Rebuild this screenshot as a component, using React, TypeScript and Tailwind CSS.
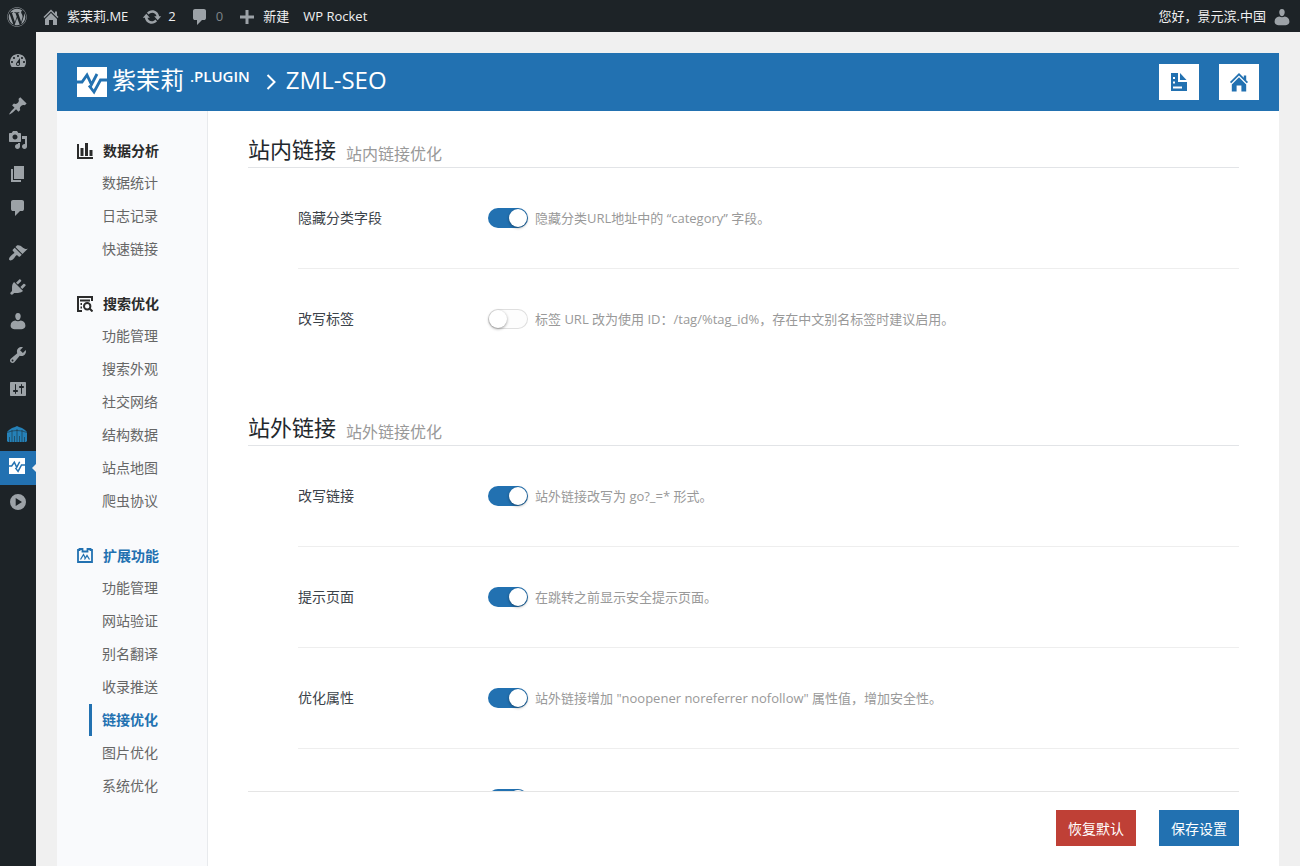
import type { ReactNode } from "react";
import { FaWordpress } from "react-icons/fa";

const DASHICONS = {
    home: "M16 8.5l1.53 1.53-1.06 1.06L10 4.6l-6.47 6.49-1.06-1.06L10 2.5l4 4v-2h2v4zm-6-2.46l6 5.99V18h-4v-5H8v5H4v-5.97z",
    update: "M10.2 3.28c3.53 0 6.43 2.61 6.92 6h2.08l-3.5 4-3.5-4h2.32c-.45-1.97-2.21-3.45-4.32-3.45-1.45 0-2.73.71-3.54 1.78L4.95 5.66C6.23 4.2 8.11 3.28 10.2 3.28zm-.4 13.44c-3.52 0-6.43-2.61-6.92-6H.8l3.5-4c1.17 1.33 2.33 2.67 3.5 4H5.48c.45 1.97 2.21 3.45 4.32 3.45 1.45 0 2.73-.71 3.54-1.78l1.71 1.95c-1.28 1.46-3.15 2.38-5.25 2.38z",
    comment:
        "M5 2h9q.82 0 1.41.59T16 4v7q0 .82-.59 1.41T14 13h-2l-5 5v-5H5q-.82 0-1.41-.59T3 11V4q0-.82.59-1.41T5 2z",
    plus: "M17 8.5v3h-5.5V17h-3v-5.5H3v-3h5.5V3h3v5.5z",
    dashboard:
        "M3.76 16h12.48c1.1-1.37 1.76-3.11 1.76-5 0-4.42-3.58-8-8-8s-8 3.58-8 8c0 1.89.66 3.63 1.76 5zM10 4c.55 0 1 .45 1 1s-.45 1-1 1-1-.45-1-1 .45-1 1-1zM6 6c.55 0 1 .45 1 1s-.45 1-1 1-1-.45-1-1 .45-1 1-1zm8 0c.55 0 1 .45 1 1s-.45 1-1 1-1-.45-1-1 .45-1 1-1zm-5.37 5.55L12 7v6c0 1.1-.9 2-2 2s-2-.9-2-2c0-.57.24-1.08.63-1.45zM4 10c.55 0 1 .45 1 1s-.45 1-1 1-1-.45-1-1 .45-1 1-1zm12 0c.55 0 1 .45 1 1s-.45 1-1 1-1-.45-1-1 .45-1 1-1zm-5 3c0-.55-.45-1-1-1s-1 .45-1 1 .45 1 1 1 1-.45 1-1z",
    post: "M10.44 3.02l1.82-1.82 6.36 6.35-1.83 1.82c-1.05-.68-2.48-.57-3.41.36l-.75.75c-.92.93-1.04 2.35-.35 3.41l-1.83 1.82-2.41-2.41-2.8 2.79c-.42.42-3.38 2.71-3.8 2.29s1.86-3.39 2.28-3.81l2.79-2.79L4.1 9.36l1.83-1.82c1.05.69 2.48.57 3.4-.36l.75-.75c.93-.92 1.05-2.35.36-3.41z",
    media: "M13 11V4c0-.55-.45-1-1-1h-1.67L9 1H5L3.67 3H2c-.55 0-1 .45-1 1v7c0 .55.45 1 1 1h10c.55 0 1-.45 1-1zM7 4.5c1.38 0 2.5 1.12 2.5 2.5S8.38 9.5 7 9.5 4.5 8.38 4.5 7 5.62 4.5 7 4.5zM14 6h5v10.5c0 1.38-1.12 2.5-2.5 2.5S14 17.88 14 16.5s1.12-2.5 2.5-2.5c.17 0 .34.02.5.05V9h-3V6zm-4 8.05V13h2v3.5c0 1.38-1.12 2.5-2.5 2.5S7 17.88 7 16.5 8.12 14 9.5 14c.17 0 .34.02.5.05z",
    page: "M6 15V2h10v13H6zm-1 1h8v2H3V5h2v11z",
    appearance:
        "M14.48 11.06L7.41 3.99l1.5-1.5c.5-.56 2.3-.47 3.51.32 1.21.8 1.43 1.28 2.91 2.1 1.18.64 2.45 1.26 4.45.85zm-.71.71L6.7 4.7 4.93 6.47c-.39.39-.39 1.02 0 1.41l1.06 1.06c.39.39.39 1.03 0 1.42-.6.6-1.43 1.11-2.21 1.69-.35.26-.7.53-1.01.84C1.43 14.23.4 16.08 1.4 17.07c.99 1 2.84-.03 4.18-1.36.31-.31.58-.66.85-1.02.57-.78 1.08-1.61 1.69-2.21.39-.39 1.02-.39 1.41 0l1.06 1.06c.39.39 1.02.39 1.41 0z",
    plugins:
        "M13.11 4.36L9.87 7.6 8 5.73l3.24-3.24c.35-.34 1.05-.2 1.56.32.52.51.66 1.21.31 1.55zm-8 1.77l.91-1.12 9.01 9.01-1.19.84c-.71.71-2.63 1.16-3.82 1.16H6.14L4.9 17.26c-.59.59-1.54.59-2.12 0-.59-.58-.59-1.53 0-2.12l1.24-1.24v-3.88c0-1.13.4-3.19 1.09-3.89zm7.26 3.97l3.24-3.24c.34-.35 1.04-.21 1.55.31.52.51.66 1.21.31 1.55l-3.24 3.25z",
    users: "M10 9.25c-2.27 0-2.73-3.44-2.73-3.44C7 4.02 7.82 2 9.97 2c2.16 0 2.98 2.02 2.71 3.81 0 0-.41 3.44-2.68 3.44zM12.7 9.6c2.6.2 4.7 2 4.7 4.8 0 3-1.9 3.8-7.4 3.8s-7.4-.8-7.4-3.8c0-2.8 2.1-4.6 4.7-4.8 1.6.9 3.8.9 5.4 0z",
    tools: "M16.68 9.77c-1.34 1.34-3.3 1.67-4.95.99l-5.41 6.52c-.99.99-2.59.99-3.58 0s-.99-2.59 0-3.57l6.52-5.42c-.68-1.65-.35-3.61.99-4.95 1.28-1.28 3.12-1.62 4.72-1.06l-2.89 2.89 2.82 2.82 2.86-2.87c.53 1.58.18 3.39-1.08 4.65zM3.81 16.21c.4.39 1.04.39 1.43 0 .4-.4.4-1.04 0-1.43-.39-.4-1.03-.4-1.43 0-.39.39-.39 1.03 0 1.43z",
    settings:
        "M18 16V4c0-.55-.45-1-1-1H3c-.55 0-1 .45-1 1v12c0 .55.45 1 1 1h14c.55 0 1-.45 1-1zM8 11h1c.55 0 1 .45 1 1s-.45 1-1 1H8v1.5c0 .28-.22.5-.5.5s-.5-.22-.5-.5V13H6c-.55 0-1-.45-1-1s.45-1 1-1h1V5.5c0-.28.22-.5.5-.5s.5.22.5.5V11zm5-2h-1c-.55 0-1-.45-1-1s.45-1 1-1h1V5.5c0-.28.22-.5.5-.5s.5.22.5.5V7h1c.55 0 1 .45 1 1s-.45 1-1 1h-1v5.5c0 .28-.22.5-.5.5s-.5-.22-.5-.5V9z",
    collapse: "M10 2a8 8 0 1 0 0 16 8 8 0 0 0 0-16zM7.7 6l6.3 4-6.3 4z",
};

type IconName = keyof typeof DASHICONS;

function Dashicon({ name, className = "size-5" }: { name: IconName; className?: string }) {
    return (
        <svg viewBox="0 0 20 20" className={className} fill="currentColor" fillRule="evenodd" aria-hidden="true">
            <path d={DASHICONS[name]} />
        </svg>
    );
}

function PulseLogo({ className }: { className: string }) {
    return (
        <svg viewBox="0 0 30 30" className={className} aria-hidden="true">
            <path fill="#fff" d="M0 0h30v30H0z" />
            <g fill="none" stroke="#2271b1" strokeWidth="2.8">
                <path d="M0 15h5l5-7 4.500 9.500L20 7" />
                <path d="M12 18.500l5 6.500 6.500-12H30" />
            </g>
        </svg>
    );
}

function ChartIcon() {
    return (
        <svg viewBox="0 0 16 16" className="size-4" fill="currentColor" aria-hidden="true">
            <path d="M0 1h2v13h14v2H0zM3.5 5h3v8h-3zM8 0h3v13H8zM12.5 7h3v6h-3z" />
        </svg>
    );
}

function SearchListIcon() {
    return (
        <svg viewBox="0 0 16 16" className="size-4" fill="none" stroke="currentColor" strokeWidth="2" aria-hidden="true">
            <path d="M15 5V1H1v14h4M3 4.500h10M3.500 8h1.500M3.500 11.500h1.500" />
            <circle cx="10.200" cy="10.200" r="3.200" />
            <path d="M12.500 12.500l3 3" />
        </svg>
    );
}

function ExtensionIcon() {
    return (
        <svg viewBox="0 0 16 16" className="size-4" fill="none" stroke="currentColor" strokeWidth="1.800" aria-hidden="true">
            <path d="M1 2h1.500V1h3v2.500h5V1h3v1H15v12H1z" />
            <path d="M3.500 11.500l3-5 2 4M7.500 11.500l2.500-4 2.500 4" strokeWidth="1.300" />
        </svg>
    );
}

function GateIcon() {
    return (
        <svg viewBox="0 0 20 16" className="h-4 w-5" aria-hidden="true">
            <path fill="#2581b8" d="M0 6l2-2 3-2 3-1 2-1 2 1 3 1 3 2 2 2v9l-1 1H1l-1-1z" />
            <path
                d="M0 6.500l5-1.500 5-.500 5 .500 5 1.500M5 4v12M10 3v13M15 4v12M2.500 16v-5M7.500 16v-6M12.500 16v-6M17.500 16v-5"
                fill="none"
                stroke="#1d2327"
                strokeWidth=".5"
            />
        </svg>
    );
}

function DocumentIcon() {
    return (
        <svg viewBox="0 0 16 18" className="h-[18px] w-4" fill="currentColor" fillRule="evenodd" aria-hidden="true">
            <path d="M0 0h7v9h9v9H0zM2 4v2h2V4zM2 8.500v2h2v-2zM2 13.500v2h9v-2z" />
            <path d="M9 0l6.500 7H9z" />
        </svg>
    );
}

const adminMenu: IconName[][] = [
    ["dashboard"],
    ["post", "media", "page", "comment"],
    ["appearance", "plugins", "users", "tools", "settings"],
];

type NavGroup = { title: string; icon: ReactNode; active?: boolean; items: string[] };

const navGroups: NavGroup[] = [
    { title: "数据分析", icon: <ChartIcon />, items: ["数据统计", "日志记录", "快速链接"] },
    {
        title: "搜索优化",
        icon: <SearchListIcon />,
        items: ["功能管理", "搜索外观", "社交网络", "结构数据", "站点地图", "爬虫协议"],
    },
    {
        title: "扩展功能",
        icon: <ExtensionIcon />,
        active: true,
        items: ["功能管理", "网站验证", "别名翻译", "收录推送", "链接优化", "图片优化", "系统优化"],
    },
];

const currentItem = "链接优化";

type Setting = { id: string; label?: string; hint?: string; on: boolean };

const sections: { title: string; subtitle: string; settings: Setting[] }[] = [
    {
        title: "站内链接",
        subtitle: "站内链接优化",
        settings: [
            { id: "category", label: "隐藏分类字段", hint: "隐藏分类URL地址中的 “category” 字段。", on: true },
            {
                id: "tag",
                label: "改写标签",
                hint: "标签 URL 改为使用 ID：/tag/%tag_id%，存在中文别名标签时建议启用。",
                on: false,
            },
        ],
    },
    {
        title: "站外链接",
        subtitle: "站外链接优化",
        settings: [
            { id: "go", label: "改写链接", hint: "站外链接改写为 go?_=* 形式。", on: true },
            { id: "notice", label: "提示页面", hint: "在跳转之前显示安全提示页面。", on: true },
            {
                id: "rel",
                label: "优化属性",
                hint: '站外链接增加 "noopener noreferrer nofollow" 属性值，增加安全性。',
                on: true,
            },
            { id: "blank", on: true },
        ],
    },
];

function AdminBar() {
    return (
        <header className="flex h-8 shrink-0 items-center justify-between bg-[#1d2327] pt-0.5 pr-2 pl-[7px] text-[13px] text-[#f0f0f1]">
            <div className="flex items-center gap-3.5">
                <a href="#" aria-label="WordPress" className="text-[#9ca2a7]">
                    <FaWordpress className="size-5" />
                </a>
                <a href="#" className="flex items-center gap-1.5">
                    <Dashicon name="home" className="size-5 text-[#9ca2a7]" />
                    紫茉莉.ME
                </a>
                <a href="#" className="flex items-center gap-1.5">
                    <Dashicon name="update" className="size-5 text-[#9ca2a7]" />2
                </a>
                <a href="#" className="flex items-center gap-1.5 text-[#9ca2a7]">
                    <Dashicon name="comment" />
                    <span className="text-[#7f8589]">0</span>
                </a>
                <a href="#" className="flex items-center gap-1.5">
                    <Dashicon name="plus" className="size-5 text-[#9ca2a7]" />
                    新建
                </a>
                <a href="#">WP Rocket</a>
            </div>
            <a href="#" className="flex items-center gap-1.5">
                您好，景元滨.中国
                <Dashicon name="users" className="size-5 text-[#9ca2a7]" />
            </a>
        </header>
    );
}

function AdminMenu() {
    return (
        <nav aria-label="管理菜单" className="flex w-9 shrink-0 flex-col gap-[11px] bg-[#1d2327] pt-3 text-[#9ca2a7]">
            {adminMenu.map((group) => (
                <div key={group[0]}>
                    {group.map((name) => (
                        <a
                            key={name}
                            href="#"
                            aria-label={name}
                            className="flex h-[34px] items-center justify-center"
                        >
                            <Dashicon name={name} />
                        </a>
                    ))}
                </div>
            ))}
            <div>
                <a href="#" aria-label="waf" className="flex h-[34px] items-center justify-center pr-0.5">
                    <GateIcon />
                </a>
                <a
                    href="#"
                    aria-label="ZML-SEO"
                    className="relative flex h-[34px] items-center justify-center bg-[#2271b1] pr-0.5 pb-1"
                >
                    <PulseLogo className="size-4" />
                    <span className="absolute top-[13px] right-0 border-4 border-transparent border-r-[#f0f0f0]" />
                </a>
                <button
                    type="button"
                    aria-label="collapse"
                    className="flex h-[34px] w-full items-center justify-center"
                >
                    <Dashicon name="collapse" />
                </button>
            </div>
        </nav>
    );
}

function PanelHeader() {
    return (
        <div className="flex h-[58px] shrink-0 items-center justify-between bg-[#2271b1] px-5 text-white">
            <div className="flex items-center text-2xl">
                <PulseLogo className="mr-[5px] size-[30px]" />
                <span className="pb-1">紫茉莉</span>
                <span className="mb-3 ml-1.5 text-[15px] font-semibold">.PLUGIN</span>
                <svg
                    viewBox="0 0 10 16"
                    className="mr-2.5 ml-4 h-4 w-2.5"
                    fill="none"
                    stroke="currentColor"
                    strokeWidth="2"
                    aria-hidden="true"
                >
                    <path d="M1.500 1l7 7-7 7" />
                </svg>
                <span className="pb-1">ZML-SEO</span>
            </div>
            <div className="flex gap-5 text-[#2271b1]">
                <a href="#" aria-label="文档" className="flex h-9 w-10 items-center justify-center bg-white">
                    <DocumentIcon />
                </a>
                <a href="#" aria-label="主页" className="flex h-9 w-10 items-center justify-center bg-white">
                    <Dashicon name="home" className="size-6" />
                </a>
            </div>
        </div>
    );
}

function SideNav() {
    return (
        <nav
            aria-label="设置"
            className="flex w-[151px] shrink-0 flex-col gap-[22px] border-r border-[#e8eaed] bg-[#f9fafc] pt-6 text-sm text-[#666]"
        >
            {navGroups.map((group) => (
                <div key={group.title}>
                    <h2
                        className={`flex h-8 items-center gap-2.5 pl-5 font-bold ${group.active ? "text-[#2271b1]" : "text-[#2b2b2b]"}`}
                    >
                        {group.icon}
                        {group.title}
                    </h2>
                    <ul>
                        {group.items.map((item) => (
                            <li key={item} className="pb-px">
                                <a
                                    href="#"
                                    className={`ml-8 flex h-8 items-center border-l-[3px] pl-2.5 ${item === currentItem ? "border-[#2271b1] font-bold text-[#2271b1]" : "border-transparent"}`}
                                >
                                    {item}
                                </a>
                            </li>
                        ))}
                    </ul>
                </div>
            ))}
        </nav>
    );
}

function SettingRow({ id, label, hint, on }: Setting) {
    return (
        <div className="ml-[50px] flex h-[101px] items-center border-b border-[#eee] last:border-transparent">
            <label htmlFor={id} className="w-[190px] shrink-0 text-sm text-[#3c434a]">
                {label}
            </label>
            <input
                id={id}
                type="checkbox"
                role="switch"
                aria-label={label ?? id}
                defaultChecked={on}
                className="flex h-5 w-10 shrink-0 appearance-none items-center rounded-full bg-[#fdfdfd] shadow-[inset_0_0_0_1px_#dfdfdf] before:size-[18px] before:translate-x-px before:rounded-full before:bg-white before:shadow-[0_1px_3px_rgba(0,0,0,0.4)] checked:bg-[#2271b1] checked:shadow-none checked:before:translate-x-[21px]"
            />
            {hint && <p className="ml-[7px] pt-0.5 text-[13px] text-[#999]">{hint}</p>}
        </div>
    );
}

export default function App() {
    return (
        <div className="flex h-screen flex-col overflow-hidden bg-[#f0f0f0] font-['Open_Sans','Noto_Sans_CJK_SC',sans-serif]">
            <AdminBar />
            <div className="flex min-h-0 flex-1">
                <AdminMenu />
                <main className="flex min-w-0 flex-1 flex-col px-[21px] pt-[21px]">
                    <PanelHeader />
                    <div className="flex min-h-0 flex-1 bg-white">
                        <SideNav />
                        <form className="flex min-w-0 flex-1 flex-col px-10">
                            <div className="min-h-0 flex-1 overflow-y-auto pt-5 [scrollbar-width:none]">
                                {sections.map((section) => (
                                    <section key={section.title} className="mb-[39px]">
                                        <div className="flex h-[37px] items-end gap-2.5 border-b border-[#e2e4e7]">
                                            <h3 className="text-[22px] leading-9 text-[#23282d]">{section.title}</h3>
                                            <span className="text-base leading-[26px] text-[#999]">
                                                {section.subtitle}
                                            </span>
                                        </div>
                                        {section.settings.map((setting) => (
                                            <SettingRow key={setting.id} {...setting} />
                                        ))}
                                    </section>
                                ))}
                            </div>
                            <div className="flex h-[75px] shrink-0 items-center justify-end gap-[23px] border-t border-[#e5e5e5] pb-0.5 text-sm text-white">
                                <button type="reset" className="h-9 w-20 bg-[#bf4036] pt-0.5">
                                    恢复默认
                                </button>
                                <button type="button" className="h-9 w-20 bg-[#2271b1] pt-0.5">
                                    保存设置
                                </button>
                            </div>
                        </form>
                    </div>
                </main>
            </div>
        </div>
    );
}
